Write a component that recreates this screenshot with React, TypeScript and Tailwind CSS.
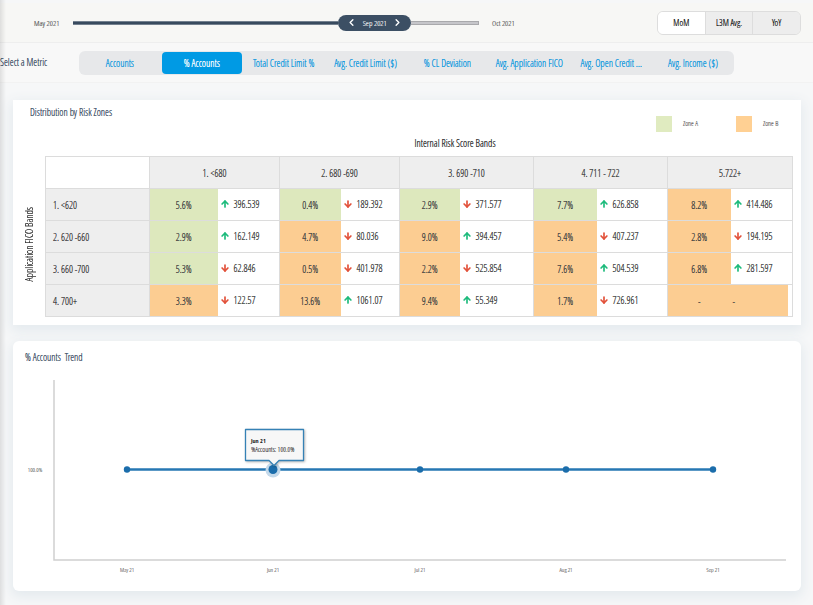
import { ArrowDown, ArrowUp, ChevronLeft, ChevronRight } from "lucide-react";
import { useState } from "react";

type Zone = "a" | "b";
type Cell = { pct: string; zone: Zone; up: boolean; value: string } | null;

const periods = ["MoM", "L3M Avg.", "YoY"];

const metrics = [
  "Accounts",
  "% Accounts",
  "Total Credit Limit %",
  "Avg. Credit Limit ($)",
  "% CL Deviation",
  "Avg. Application FICO",
  "Avg. Open Credit …",
  "Avg. Income ($)",
];

const scoreBands = ["1. <680", "2. 680 -690", "3. 690 -710", "4. 711 - 722", "5.722+"];

const c = (pct: string, zone: Zone, up: boolean, value: string): Cell => ({ pct, zone, up, value });

const rows: { band: string; cells: Cell[] }[] = [
  {
    band: "1. <620",
    cells: [
      c("5.6%", "a", true, "396.539"),
      c("0.4%", "a", false, "189.392"),
      c("2.9%", "a", false, "371.577"),
      c("7.7%", "a", true, "626.858"),
      c("8.2%", "b", true, "414.486"),
    ],
  },
  {
    band: "2. 620 -660",
    cells: [
      c("2.9%", "a", true, "162.149"),
      c("4.7%", "b", false, "80.036"),
      c("9.0%", "b", true, "394.457"),
      c("5.4%", "b", false, "407.237"),
      c("2.8%", "b", false, "194.195"),
    ],
  },
  {
    band: "3. 660 -700",
    cells: [
      c("5.3%", "a", false, "62.846"),
      c("0.5%", "b", false, "401.978"),
      c("2.2%", "b", false, "525.854"),
      c("7.6%", "b", true, "504.539"),
      c("6.8%", "b", true, "281.597"),
    ],
  },
  {
    band: "4. 700+",
    cells: [
      c("3.3%", "b", false, "122.57"),
      c("13.6%", "b", true, "1061.07"),
      c("9.4%", "b", true, "55.349"),
      c("1.7%", "b", false, "726.961"),
      null,
    ],
  },
];

const zoneFill: Record<Zone, string> = { a: "bg-[#dde8bd]", b: "bg-[#fccd92]" };

function TimelineBar() {
  const [period, setPeriod] = useState("MoM");
  return (
    <header className="flex h-10 items-center border-b border-[#eeeeee] bg-[#f7f7f5] pr-3 pl-[34px] text-[8px] text-[#666666]">
      <span className="w-[39px] shrink-0">May 2021</span>
      <div className="flex flex-1 items-center">
        <div className="h-1 flex-[266] border-y border-[#73808e] bg-[#384a5e]" />
        <div className="flex h-4 w-[73px] shrink-0 items-center justify-between rounded-full bg-[#3c4f64] px-2 text-[#e4e7ea]">
          <button type="button" aria-label="Previous month" className="text-white">
            <ChevronLeft size={11} strokeWidth={3} />
          </button>
          <span>Sep 2021</span>
          <button type="button" aria-label="Next month" className="text-white">
            <ChevronRight size={11} strokeWidth={3} />
          </button>
        </div>
        <div className="h-1 flex-[67] border border-l-0 border-[#a9a9ac] bg-[#c6c6ca]" />
      </div>
      <span className="ml-[13px] w-[26px] shrink-0 whitespace-nowrap">Oct 2021</span>
      <div className="ml-[139px] flex h-6 w-36 shrink-0 overflow-hidden rounded-md border border-[#dddddd] text-[9px] text-[#222222]">
        {periods.map((p) => (
          <button
            key={p}
            type="button"
            aria-pressed={p === period}
            onClick={() => setPeriod(p)}
            className={`flex-1 border-r border-[#dddddd] text-shadow-[0_0_0_currentColor] last:border-r-0 ${p === period ? "bg-white" : "bg-[#ededed]"}`}
          >
            {p}
          </button>
        ))}
      </div>
    </header>
  );
}

function MetricBar() {
  const [metric, setMetric] = useState("% Accounts");
  return (
    <nav className="flex h-10 items-center border-b border-[#f2f2f2] bg-[#f8f8f8] pr-[79px] text-[10px]">
      <span className="w-[79px] shrink-0 text-[#44546a]">Select a Metric</span>
      <div className="flex h-6 flex-1 rounded-md bg-[#e7e8ea]">
        {metrics.map((m) => (
          <button
            key={m}
            type="button"
            aria-pressed={m === metric}
            onClick={() => setMetric(m)}
            className={`m-px min-w-0 flex-1 rounded pt-px whitespace-nowrap text-shadow-[0_0_0_currentColor] ${m === metric ? "bg-[#009ae4] text-white" : "text-[#0f98de]"}`}
          >
            {m}
          </button>
        ))}
      </div>
    </nav>
  );
}

function Trend({ up }: { up: boolean }) {
  return up ? (
    <ArrowUp size={10} strokeWidth={4} className="shrink-0 text-[#1dbb7c]" aria-label="up" />
  ) : (
    <ArrowDown size={10} strokeWidth={4} className="shrink-0 text-[#e2513a]" aria-label="down" />
  );
}

function CellPair({ cell }: { cell: Cell }) {
  if (!cell) {
    return (
      <td colSpan={2} className="border border-[#dcdcdc] p-0">
        <div className="mr-1 flex h-[31px] items-center gap-8 bg-[#fccd92] pl-[30px]">
          <span>-</span>
          <span>-</span>
        </div>
      </td>
    );
  }
  return (
    <>
      <td className={`border-y border-l border-[#dcdcdc] p-0 pt-px text-center ${zoneFill[cell.zone]}`}>
        {cell.pct}
      </td>
      <td className="border-y border-r border-[#dcdcdc] p-0 pb-px pl-[2px]">
        <div className="flex items-center gap-1">
          <Trend up={cell.up} />
          {cell.value}
        </div>
      </td>
    </>
  );
}

function RiskZones() {
  return (
    <section className="bg-white pt-[6px] pr-2 pb-2 pl-3 shadow-[0_4px_12px_2px_#e4eaee]">
      <div className="flex h-[50px] flex-col">
        <div className="flex items-start justify-between pr-[13px] pl-[5px]">
          <h2 className="text-[10px] leading-3 text-[#44546a]">Distribution by Risk Zones</h2>
          <ul className="flex gap-9 pt-[10px] text-[7px] text-[#666666]">
            <li className="flex items-center gap-[11px]">
              <span className="size-4 bg-[#e0ebc0]" />
              <span className="w-[17px] whitespace-nowrap">Zone A</span>
            </li>
            <li className="flex items-center gap-[11px]">
              <span className="size-4 bg-[#ffd093]" />
              <span className="w-[17px] whitespace-nowrap">Zone B</span>
            </li>
          </ul>
        </div>
        <p className="mt-[5px] pl-[92px] text-center text-[10px] leading-3 text-[#333333]">Internal Risk Score Bands</p>
      </div>
      <div className="flex">
        <div className="flex w-5 shrink-0 items-center pt-4">
          <span className="rotate-180 text-[10px] leading-2 whitespace-nowrap text-[#333333] [writing-mode:vertical-rl]">
            Application FICO Bands
          </span>
        </div>
        <table className="w-full table-fixed border-collapse text-[10px] leading-3 text-[#444444]">
          <colgroup>
            <col className="w-[104px]" />
            <col className="w-[68px]" />
            <col className="w-[62px]" />
            <col className="w-[61px]" />
            <col className="w-[59px]" />
            <col className="w-[60px]" />
            <col className="w-[74px]" />
            <col className="w-[63px]" />
            <col className="w-[71px]" />
            <col className="w-[63px]" />
            <col className="w-[62px]" />
          </colgroup>
          <thead>
            <tr className="h-8">
              <td className="border border-[#dcdcdc]" />
              {scoreBands.map((b) => (
                <th key={b} scope="col" colSpan={2} className="border border-[#dcdcdc] bg-[#eeeeee] p-0 font-normal">
                  {b}
                </th>
              ))}
            </tr>
          </thead>
          <tbody>
            {rows.map((r) => (
              <tr key={r.band} className="h-8">
                <th scope="row" className="border border-[#dcdcdc] bg-[#eeeeee] p-0 pt-px pl-[7px] text-left font-normal">
                  {r.band}
                </th>
                {r.cells.map((cell, i) => (
                  <CellPair key={i} cell={cell} />
                ))}
              </tr>
            ))}
          </tbody>
        </table>
      </div>
    </section>
  );
}

const points = [
  { x: 114, label: "May 21" },
  { x: 260, label: "Jun 21" },
  { x: 407, label: "Jul 21" },
  { x: 553, label: "Aug 21" },
  { x: 700, label: "Sep 21" },
];

function TrendChart() {
  return (
    <section className="rounded-md bg-white pt-[10px] shadow-[0_4px_12px_2px_#e4eaee]">
      <h2 className="pl-3 text-[10px] leading-3 whitespace-pre text-[#44546a]">{"% Accounts  Trend"}</h2>
      <svg viewBox="0 0 788 228" className="block w-full" role="img" aria-label="% Accounts trend">
        <path d="M41 17V197H773" fill="none" stroke="#d0d0d0" strokeWidth="1.5" />
        <path d="M114 106.5H700" stroke="#2677b3" strokeWidth="2.5" />
        <circle cx="260" cy="107" r="7.5" fill="#c4d9ea" />
        <g fill="#1b6dab">
          {points.map((p) => (
            <circle key={p.label} cx={p.x} cy="106.5" r={p.x === 260 ? 4.5 : 3.2} />
          ))}
        </g>
        <g className="text-[6px] text-[#777777]" fill="currentColor" textAnchor="middle">
          <text x="22" y="109">100.0%</text>
          {points.map((p) => (
            <text key={p.label} x={p.x} y="209">{p.label}</text>
          ))}
        </g>
        <path
          d="M232.5 66.5H290.5V97.5H266L261 102.5L256 97.5H232.5Z"
          fill="#f7f7f7"
          stroke="#3581b5"
          strokeWidth="1.3"
          strokeLinejoin="round"
          className="drop-shadow-[1px_1px_1px_#00000040]"
        />
        <g className="text-[7px] text-[#444444]" fill="currentColor">
          <text x="238" y="80" className="font-['Open_Sans_Condensed'] text-[6px] font-bold text-[#111111] text-shadow-none">Jun 21</text>
          <text x="238" y="89">%Accounts: 100.0%</text>
        </g>
      </svg>
    </section>
  );
}

export default function App() {
  return (
    <div className="relative min-h-screen bg-[#f6f7f8] pt-[3px] font-['Open_Sans_Condensed_Light','OpenSans-CondensedLight','Open_Sans_Light_Condensed','Liberation_Sans_Narrow',sans-serif] text-shadow-[0_0_0_currentColor]">
      <TimelineBar />
      <MetricBar />
      <main className="flex flex-col gap-4 pt-[17px] pr-3 pb-[14px] pl-[13px]">
        <RiskZones />
        <TrendChart />
      </main>
      <div className="pointer-events-none absolute inset-y-0 left-0 w-1.5 bg-linear-to-r from-black/10 to-transparent" />
    </div>
  );
}
